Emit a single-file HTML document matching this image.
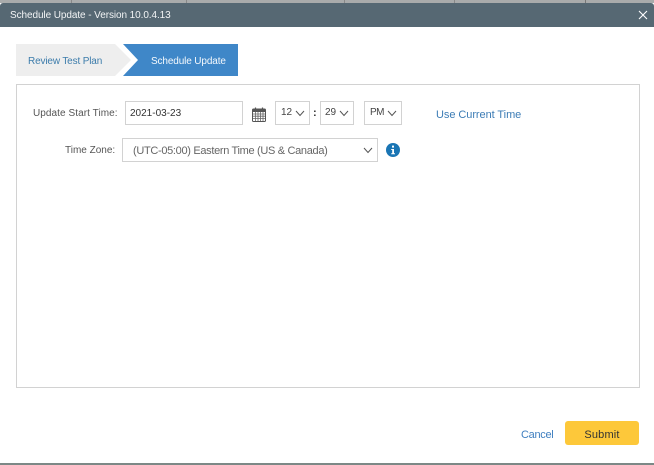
<!DOCTYPE html>
<html><head><meta charset="utf-8">
<style>
html,body{margin:0;padding:0;width:654px;height:465px;overflow:hidden;background:#fff}
body{position:relative;font-family:"Liberation Sans",sans-serif;font-size:10px;color:#444}
.a{position:absolute;white-space:nowrap}
.box{position:absolute;box-sizing:border-box;border:1px solid #d2d2d2;background:#fff}
.t{position:absolute;white-space:nowrap;line-height:14px}
</style></head><body>
<div class="a" style="left:0;top:0;width:654px;height:3px;background:#a9abab"></div>
<div class="a" style="left:71px;top:0;width:1px;height:3px;background:#888"></div>
<div class="a" style="left:186px;top:0;width:1px;height:3px;background:#888"></div>
<div class="a" style="left:344px;top:0;width:1px;height:3px;background:#888"></div>
<div class="a" style="left:454px;top:0;width:1px;height:3px;background:#888"></div>
<div class="a" style="left:585px;top:0;width:1px;height:3px;background:#777"></div>
<div class="a" style="left:0;top:3px;width:654px;height:24px;background:#566873;border-radius:3px 3px 0 0"></div>
<div class="t" style="left:10px;top:9px;color:#f2f4f5;letter-spacing:-.08px">Schedule Update - Version 10.0.4.13</div>
<svg class="a" style="left:638px;top:10px" width="10" height="10" viewBox="0 0 10 10"><path d="M1 1L9 9M9 1L1 9" stroke="#fff" stroke-width="1.1" fill="none"/></svg>

<svg class="a" style="left:16px;top:44px" width="224" height="32" viewBox="0 0 224 32">
<path d="M0 0H99L115 16L99 32H0Z" fill="#eeeeee"/>
<path d="M107 0H222V32H107L122 16Z" fill="#3f87c8"/>
</svg>
<div class="t" style="left:28px;top:55px;color:#3c7cab;letter-spacing:-.15px">Review Test Plan</div>
<div class="t" style="left:151px;top:55px;color:#f4f8fc;letter-spacing:-.13px">Schedule Update</div>

<div class="box" style="left:16px;top:84px;width:624px;height:304px"></div>

<div class="t" style="left:33px;top:107px;color:#555;letter-spacing:.07px">Update Start Time:</div>
<div class="box" style="left:125px;top:101px;width:118px;height:24px"></div>
<div class="t" style="left:130px;top:107px;color:#333">2021-03-23</div>

<svg class="a" style="left:252px;top:107px" width="14" height="15" viewBox="0 0 14 15">
<rect x=".5" y="2" width="13" height="12.5" rx="1" fill="#fff" stroke="#555"/>
<rect x="1" y="2.5" width="12" height="2.5" fill="#555"/>
<path d="M3.5 .5V3M10.5 .5V3" stroke="#555" stroke-width="1.2"/>
<path d="M1 7H13M1 9.2H13M1 11.5H13M3.5 5V14M6 5V14M8.5 5V14M11 5V14" stroke="#666" stroke-width=".8"/>
</svg>

<div class="box" style="left:275px;top:101px;width:35px;height:24px"></div>
<div class="t" style="left:281px;top:106px;color:#444">12</div>
<svg class="a" style="left:295px;top:110px" width="10" height="7" viewBox="0 0 10 7"><path d="M1 1L5 5.5L9 1" stroke="#555" fill="none"/></svg>
<div class="t" style="left:313px;top:106px;color:#333;font-weight:bold;font-size:11px">:</div>
<div class="box" style="left:320px;top:101px;width:34px;height:24px"></div>
<div class="t" style="left:325px;top:106px;color:#444">29</div>
<svg class="a" style="left:339px;top:110px" width="10" height="7" viewBox="0 0 10 7"><path d="M1 1L5 5.5L9 1" stroke="#555" fill="none"/></svg>
<div class="box" style="left:364px;top:101px;width:38px;height:24px"></div>
<div class="t" style="left:370px;top:106px;color:#444;letter-spacing:-.5px">PM</div>
<svg class="a" style="left:387px;top:110px" width="10" height="7" viewBox="0 0 10 7"><path d="M1 1L5 5.5L9 1" stroke="#555" fill="none"/></svg>
<div class="t" style="left:436px;top:108px;color:#3c7cb5;font-size:11px;letter-spacing:-.06px">Use Current Time</div>

<div class="t" style="left:65px;top:144px;color:#555">Time Zone:</div>
<div class="box" style="left:122px;top:138px;width:256px;height:24px"></div>
<div class="t" style="left:133px;top:144px;color:#666;font-size:11px;letter-spacing:-.32px">(UTC-05:00) Eastern Time (US &amp; Canada)</div>
<svg class="a" style="left:363px;top:147px" width="10" height="7" viewBox="0 0 10 7"><path d="M1 1L5 5.5L9 1" stroke="#555" fill="none"/></svg>
<svg class="a" style="left:386px;top:143px" width="14" height="14" viewBox="0 0 14 14">
<circle cx="7" cy="7" r="7" fill="#1a75b4"/>
<rect x="6" y="2.6" width="2" height="2" fill="#fff"/>
<path d="M5.2 6H8V10.2H9V11.2H5.2V10.2H6.2V7H5.2Z" fill="#fff"/>
</svg>

<div class="t" style="left:521px;top:428px;color:#3f7fc0;font-size:11px;letter-spacing:-.3px">Cancel</div>
<div class="a" style="left:566px;top:421px;width:74px;height:24px;background:#fdc83a;border-radius:3px;text-align:center;line-height:28px;color:#333;font-size:11px;letter-spacing:.15px;margin-left:-1px">Submit</div>

<div class="a" style="left:0;top:463px;width:654px;height:2px;background:#7c8886"></div>
</body></html>
